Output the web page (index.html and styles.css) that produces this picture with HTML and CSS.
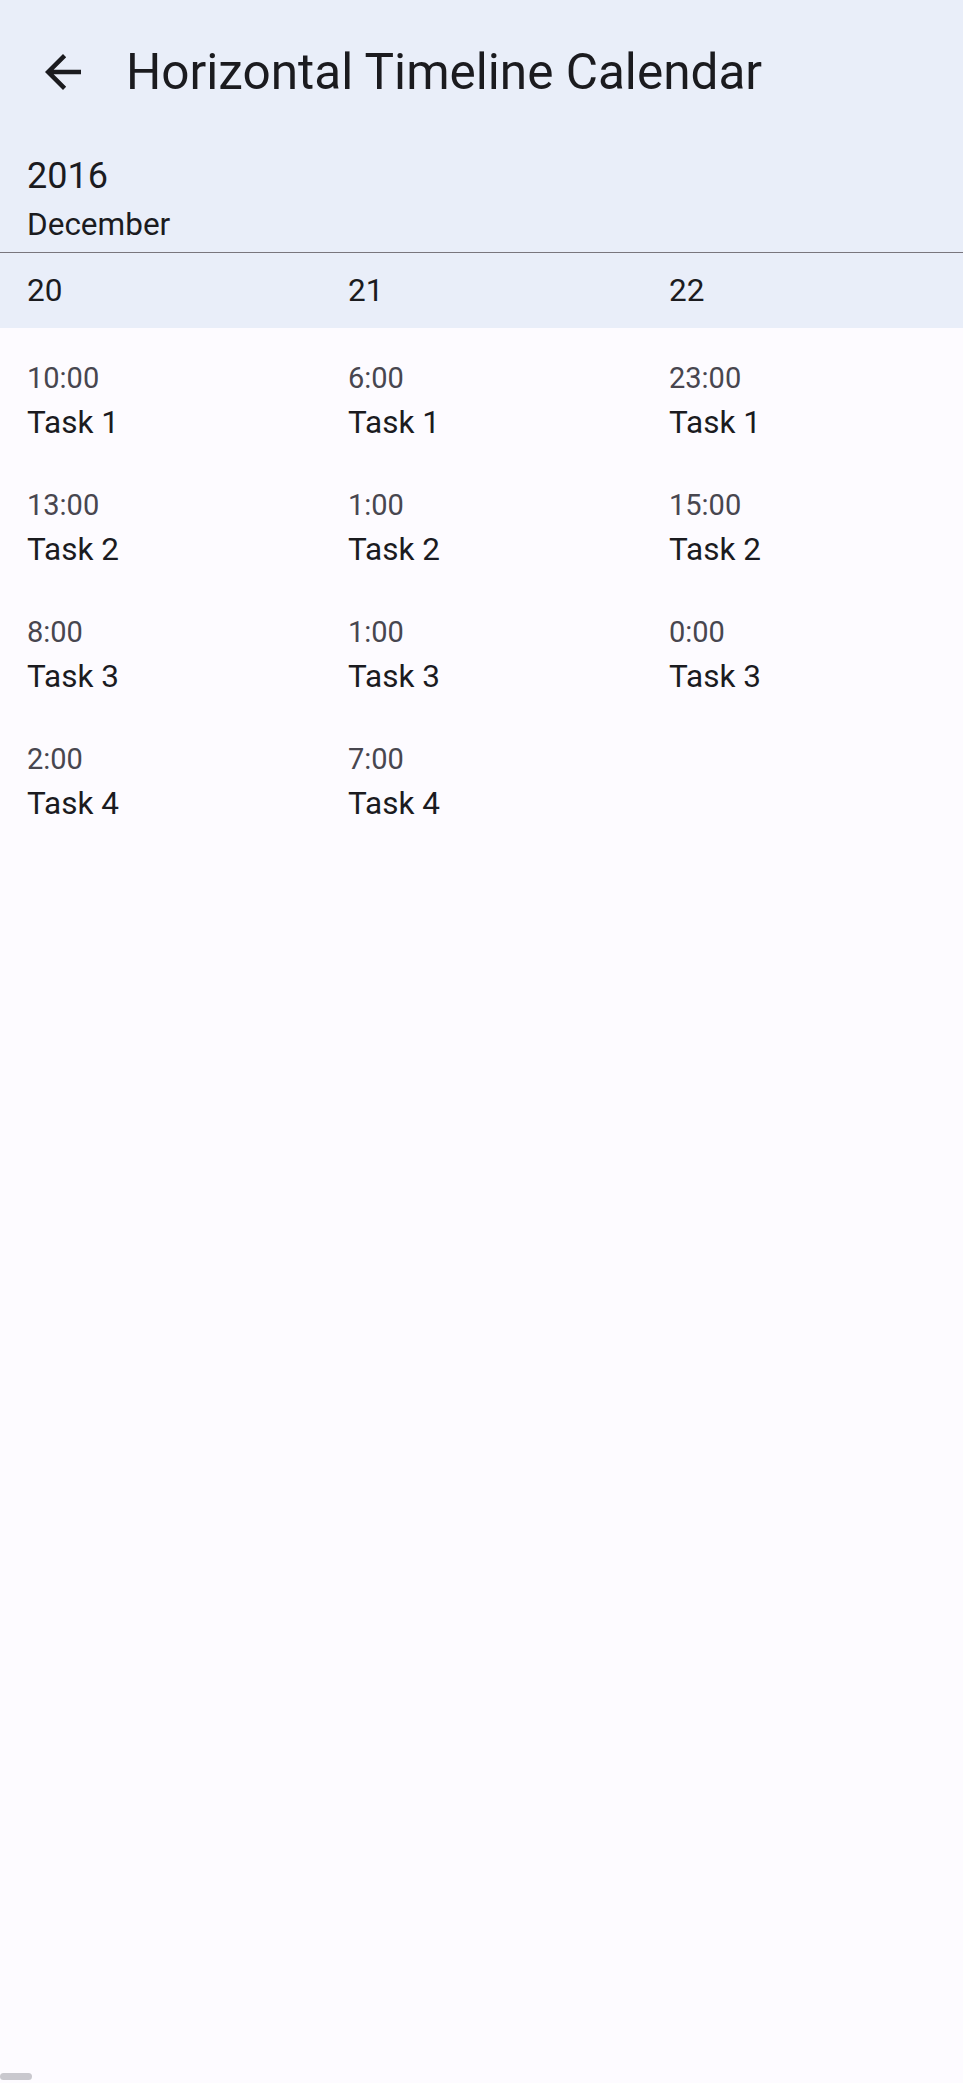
FILE: index.html
```html
<!DOCTYPE html>
<html lang="en">
<head>
<meta charset="utf-8">
<title>Horizontal Timeline Calendar</title>
<link rel="stylesheet" href="styles.css">
</head>
<body>
<div class="screen">
  <header class="appbar">
    <div class="leading">
      <svg class="back-icon" viewBox="0 0 24 24" width="54" height="54" aria-hidden="true">
        <path d="M20 11H7.83l5.59-5.59L12 4l-8 8 8 8 1.41-1.41L7.83 13H20v-2z" fill="#1b1b1f"/>
      </svg>
    </div>
    <h1 class="title">Horizontal Timeline Calendar</h1>
  </header>

  <section class="cal-header">
    <div class="year">2016</div>
    <div class="month">December</div>
    <div class="divider"></div>
    <div class="days">
      <div class="day">20</div>
      <div class="day">21</div>
      <div class="day">22</div>
    </div>
  </section>

  <section class="columns">
    <div class="col">
      <div class="task"><div class="time">10:00</div><div class="name">Task 1</div></div>
      <div class="task"><div class="time">13:00</div><div class="name">Task 2</div></div>
      <div class="task"><div class="time">8:00</div><div class="name">Task 3</div></div>
      <div class="task"><div class="time">2:00</div><div class="name">Task 4</div></div>
    </div>
    <div class="col">
      <div class="task"><div class="time">6:00</div><div class="name">Task 1</div></div>
      <div class="task"><div class="time">1:00</div><div class="name">Task 2</div></div>
      <div class="task"><div class="time">1:00</div><div class="name">Task 3</div></div>
      <div class="task"><div class="time">7:00</div><div class="name">Task 4</div></div>
    </div>
    <div class="col">
      <div class="task"><div class="time">23:00</div><div class="name">Task 1</div></div>
      <div class="task"><div class="time">15:00</div><div class="name">Task 2</div></div>
      <div class="task"><div class="time">0:00</div><div class="name">Task 3</div></div>
    </div>
  </section>

  <div class="scroll-thumb"></div>
</div>
</body>
</html>
```

FILE: styles.css
```css
html, body {
  margin: 0;
  padding: 0;
  background: #fdfbff;
}

body {
  font-family: Roboto, "Noto Sans", "Liberation Sans", sans-serif;
  color: #1b1b1f;
}

.screen {
  position: relative;
  width: 963px;
  height: 2083px;
  overflow: hidden;
  background: #fdfbff;
}

.appbar {
  display: flex;
  align-items: center;
  height: 144px;
  background: #e9eef9;
}

.leading {
  width: 126px;
  height: 144px;
  display: flex;
  align-items: center;
  justify-content: center;
  flex: none;
}

.back-icon {
  display: block;
}

.title {
  margin: 0;
  font-size: 49.5px;
  font-weight: 400;
  line-height: 144px;
  color: #1b1b1f;
  white-space: nowrap;
}

.cal-header {
  background: #e9eef9;
  padding-top: 8px;
}

.year {
  padding-left: 27px;
  font-size: 36px;
  line-height: 48px;
}

.month {
  padding-left: 27px;
  font-size: 31.5px;
  line-height: 50px;
}

.divider {
  margin-top: 2px;
  height: 1px;
  background: #79767d;
}

.days {
  display: flex;
  padding-top: 1px;
}

.day {
  flex: 1 1 0;
  padding-left: 27px;
  font-size: 31.5px;
  line-height: 74px;
}

.columns {
  display: flex;
  padding-top: 14px;
}

.col {
  flex: 1 1 0;
  padding-left: 27px;
}

.task {
  padding: 19px 0 20px;
}

.time {
  font-size: 29px;
  line-height: 35px;
  color: #48464f;
}

.name {
  font-size: 31.5px;
  line-height: 53px;
  color: #1b1b1f;
}

.scroll-thumb {
  position: absolute;
  left: 0;
  top: 2073px;
  width: 32px;
  height: 7px;
  border-radius: 4px;
  background: #c9c8ce;
}
```
